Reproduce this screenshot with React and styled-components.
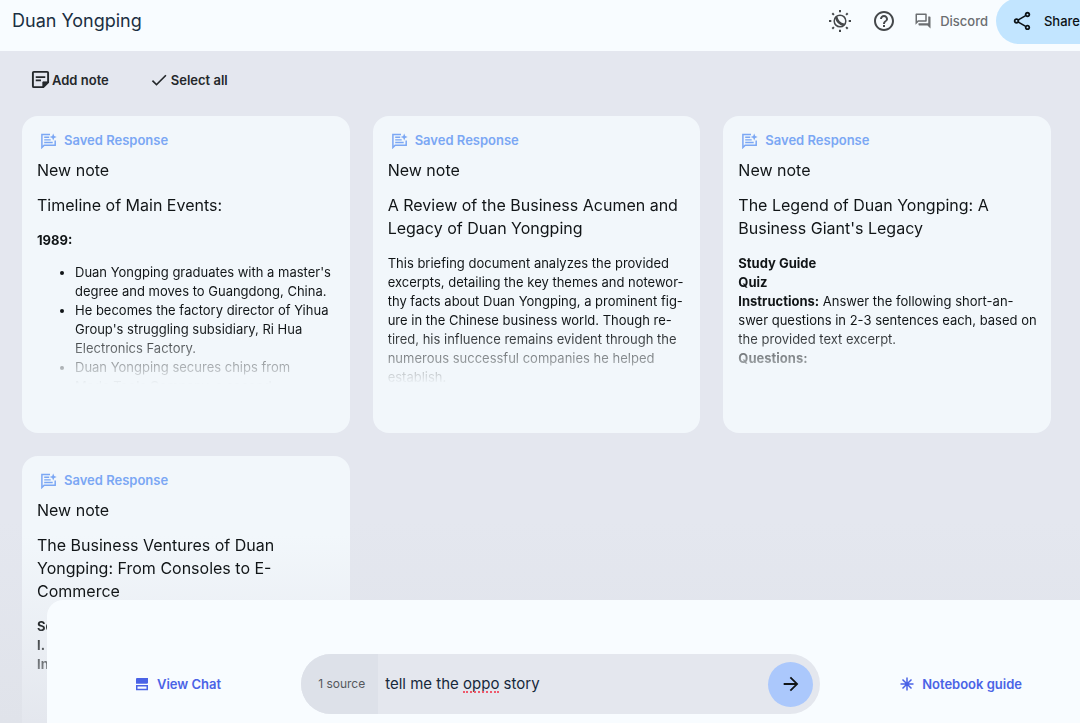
import React, { useState } from "react";
import styled, { createGlobalStyle } from "styled-components";
import { MdArrowForward, MdCheck, MdHelpOutline, MdOutlineForum, MdOutlineShare } from "react-icons/md";

const notes = [
  {
    title: ["Timeline of Main Events:"],
    body: (
      <>
        <p><b>1989:</b></p>
        <ul>
          <li>Duan Yongping graduates with a master's<br />degree and moves to Guangdong, China.</li>
          <li>He becomes the factory director of Yihua<br />Group's struggling subsidiary, Ri Hua<br />Electronics Factory.</li>
          <li>Duan Yongping secures chips from<br />Made Tools Company, a second</li>
        </ul>
      </>
    ),
  },
  {
    title: ["A Review of the Business Acumen and", "Legacy of Duan Yongping"],
    body: (
      <p>
        This briefing document analyzes the provided<br />
        excerpts, detailing the key themes and notewor-<br />
        thy facts about Duan Yongping, a prominent fig-<br />
        ure in the Chinese business world. Though re-<br />
        tired, his influence remains evident through the<br />
        numerous successful companies he helped<br />
        establish.
      </p>
    ),
  },
  {
    title: ["The Legend of Duan Yongping: A", "Business Giant's Legacy"],
    body: (
      <p>
        <b>Study Guide</b><br />
        <b>Quiz</b><br />
        <b>Instructions:</b> Answer the following short-an-<br />
        swer questions in 2-3 sentences each, based on<br />
        the provided text excerpt.<br />
        <b>Questions:</b>
      </p>
    ),
  },
  {
    title: ["The Business Ventures of Duan", "Yongping: From Consoles to E-", "Commerce"],
    faded: true,
    body: (
      <p>
        <b>So</b><br />
        <b>I.</b><br />
        <b>In</b>
      </p>
    ),
  },
];

function ThemeIcon() {
  return (
    <svg width="24" height="24" viewBox="0 0 24 24" fill="none" stroke="currentColor" strokeWidth="2">
      <circle cx="12" cy="12" r="5.8" strokeWidth="1.5" />
      <path d="M8.200 8Q9.500 14.500 16 15.800" strokeWidth="2.600" />
      <path d="M12 1v2.300M12 20.700V23M1 12h2.300M20.700 12H23M4.300 4.300l1.600 1.600M18.100 18.100l1.600 1.600M4.300 19.700l1.600-1.600M18.100 5.900l1.600-1.600" />
    </svg>
  );
}

function NoteIcon() {
  return (
    <svg width="19" height="19" viewBox="0 0 20 20" fill="none" stroke="currentColor" strokeWidth="2">
      <path d="M3 2h14a1 1 0 0 1 1 1v10l-5 5H3a1 1 0 0 1-1-1V3a1 1 0 0 1 1-1Z" />
      <path d="M12.500 18v-5.500H18Z" fill="currentColor" strokeWidth="1" />
      <path d="M5 7.500h10M5 11h5.500" strokeWidth="1.800" />
    </svg>
  );
}

function ResponseIcon() {
  return (
    <svg width="18" height="18" viewBox="0 0 18 18" fill="none" stroke="currentColor" strokeWidth="1.500">
      <path d="M11 3.500H2.900V16.500L5.200 14.200H16.200V9.500" />
      <path d="M5.200 6.300h5M5.200 8.900h6.500M5.200 11.500h8.500" strokeWidth="1.400" />
      <path d="M14.200 2.500l1 2.500 2.500 1-2.500 1-1 2.500-1-2.500-2.500-1 2.500-1Z" fill="currentColor" stroke="none" />
    </svg>
  );
}

function ChatIcon() {
  return (
    <svg width="14" height="14" viewBox="0 0 14 14" fill="currentColor">
      <path d="M2 1H13V5.500a1.200 1.200 0 0 1-1.200 1.200H1V2a1 1 0 0 1 1-1Z" />
      <path d="M1 8h12V13.200H1ZM2.500 9.500v2.200h9V9.500Z" fillRule="evenodd" />
    </svg>
  );
}

function GuideIcon() {
  return (
    <svg width="14" height="14" viewBox="0 0 14 14" stroke="currentColor" strokeWidth="1.500">
      <path d="M7 .5v13M.5 7h13M2.500 2.500l9 9M11.500 2.500l-9 9" />
    </svg>
  );
}

export default function App() {
  const [query, setQuery] = useState("tell me the oppo story");

  return (
    <Page>
      <GlobalStyle />
      <Header>
        <Title>Duan Yongping</Title>
        <HeaderActions>
          <IconButton aria-label="Toggle theme"><ThemeIcon /></IconButton>
          <IconButton aria-label="Help"><MdHelpOutline size={24} /></IconButton>
          <DiscordLink href="#discord"><MdOutlineForum size={18} />Discord</DiscordLink>
          <ShareButton><MdOutlineShare size={22} />Share</ShareButton>
        </HeaderActions>
      </Header>

      <Main>
        <Toolbar>
          <ToolButton><NoteIcon />Add note</ToolButton>
          <ToolButton><MdCheck size={20} />Select all</ToolButton>
        </Toolbar>
        <Grid>
          {notes.map((note) => (
            <Card key={note.title[0]} $faded={note.faded}>
              <Tag><ResponseIcon />Saved Response</Tag>
              <Excerpt $fade={note.faded ? 110 : 54}>
                <NoteName>New note</NoteName>
                <NoteTitle>
                  {note.title.map((line) => <span key={line}>{line}</span>)}
                </NoteTitle>
                <NoteBody>{note.body}</NoteBody>
              </Excerpt>
            </Card>
          ))}
        </Grid>
      </Main>

      <Dock>
        <DockButton><ChatIcon />View Chat</DockButton>
        <Prompt onSubmit={(e) => e.preventDefault()}>
          <Sources>1 source</Sources>
          <Field>
            <input
              aria-label="Ask a question"
              spellCheck="false"
              value={query}
              onChange={(e) => setQuery(e.target.value)}
            />
            {query.includes("oppo") && <Misspelling />}
          </Field>
          <SendButton aria-label="Send"><MdArrowForward size={22} /></SendButton>
        </Prompt>
        <DockButton><GuideIcon />Notebook guide</DockButton>
      </Dock>
    </Page>
  );
}

const GlobalStyle = createGlobalStyle`
  * {
    box-sizing: border-box;
  }
  body {
    margin: 0;
    background: #e4e7ef;
    font-family: Inter, "Liberation Sans", sans-serif;
    color: #111517;
  }
  button, input {
    font: inherit;
    color: inherit;
    border: 0;
    padding: 0;
    background: none;
  }
  button {
    cursor: pointer;
    white-space: nowrap;
  }
  svg {
    flex: none;
  }
`;

const Page = styled.div`
  display: flex;
  flex-direction: column;
  height: 100vh;
  overflow: hidden;
`;

const Header = styled.header`
  display: flex;
  flex: none;
  align-items: center;
  justify-content: space-between;
  height: 51px;
  padding: 0 0 10px 12px;
  background: #f8fcff;
  overflow: hidden;
`;

const Title = styled.h1`
  margin: 0;
  font-size: 18px;
  line-height: 24px;
  font-weight: 400;
  color: #1b2f42;
`;

const HeaderActions = styled.div`
  display: flex;
  align-items: center;
`;

const IconButton = styled.button`
  display: flex;
  padding: 0 10px;
  color: #45484b;
`;

const DiscordLink = styled.a`
  display: flex;
  align-items: center;
  gap: 8px;
  margin: 0 8px;
  font-size: 13px;
  font-weight: 500;
  color: #6b6e71;
  text-decoration: none;
`;

const ShareButton = styled.button`
  display: flex;
  align-items: center;
  gap: 11px;
  height: 46px;
  margin-right: -22px;
  padding: 0 22px 0 15px;
  border-radius: 23px;
  background: #c2e5ff;
  font-size: 13px;
  font-weight: 500;
  color: #0b1115;
`;

const Main = styled.main`
  flex: 1;
  min-height: 0;
  overflow: hidden;
  padding: 16px 29px 0 22px;
  background: linear-gradient(to bottom, #e4e7ef 70%, #e0e3ea);
`;

const Toolbar = styled.div`
  display: flex;
  gap: 40px;
  height: 49px;
  padding-left: 9px;
`;

const ToolButton = styled.button`
  display: flex;
  align-items: center;
  gap: 2px;
  height: 25px;
  font-size: 13px;
  font-weight: 600;
  color: #24282b;
`;

const Grid = styled.div`
  display: grid;
  grid-template-columns: repeat(3, minmax(0, 1fr));
  gap: 23px;
`;

const Card = styled.article`
  display: flex;
  flex-direction: column;
  height: 317px;
  padding: 12px 15px 49px;
  border-radius: 16px;
  background: ${(props) => (props.$faded ? "linear-gradient(to bottom, #f2f7fb 25%, #e3e6ed 88%)" : "#f2f7fb")};
`;

const Tag = styled.div`
  display: flex;
  align-items: center;
  gap: 7px;
  height: 24px;
  padding-left: 2px;
  font-size: 13px;
  font-weight: 600;
  color: #7ba7f4;
`;

const Excerpt = styled.div`
  flex: 1;
  min-height: 0;
  margin-top: 6px;
  overflow: hidden;
  white-space: nowrap;
  mask-image: linear-gradient(to bottom, #000 calc(100% - ${(props) => props.$fade}px), transparent);
`;

const NoteName = styled.h2`
  margin: 0;
  font-size: 16px;
  line-height: 24px;
  font-weight: 400;
`;

const NoteTitle = styled.h3`
  display: flex;
  flex-direction: column;
  margin: 12px 0 14px;
  font-size: 16px;
  line-height: 23px;
  font-weight: 400;
`;

const NoteBody = styled.div`
  font-size: 13px;
  line-height: 19px;

  p {
    margin: 0;
  }
  ul {
    margin: 13px 0 0;
    padding-left: 38px;
  }
  b {
    font-weight: 700;
  }
`;

const Dock = styled.footer`
  position: fixed;
  right: 0;
  bottom: 0;
  left: 47px;
  display: flex;
  align-items: center;
  gap: 80px;
  height: 123px;
  padding: 45px 58px 0 88px;
  border-radius: 16px 0 0 0;
  background: #f8fcff;
`;

const DockButton = styled.button`
  display: flex;
  align-items: center;
  gap: 8px;
  font-size: 13px;
  font-weight: 600;
  color: #4a63e6;
`;

const Prompt = styled.form`
  display: flex;
  flex: 1;
  align-items: center;
  height: 60px;
  padding-right: 7px;
  border-radius: 30px;
  background: #e4e7ee;
  overflow: hidden;
`;

const Sources = styled.span`
  padding: 0 13px 0 17px;
  background: #dde1e9;
  font-size: 12px;
  line-height: 60px;
  color: #55585c;
`;

const Field = styled.label`
  position: relative;
  flex: 1;
  min-width: 0;
  padding-left: 7px;

  input {
    width: 100%;
    font-size: 15px;
    line-height: 24px;
    color: #17293b;
    outline: none;
  }
`;

const Misspelling = styled.span`
  position: absolute;
  bottom: 3px;
  left: 85px;
  width: 36px;
  border-bottom: 2px dotted #ee5a6d;
`;

const SendButton = styled.button`
  display: flex;
  align-items: center;
  justify-content: center;
  width: 45px;
  height: 45px;
  border-radius: 50%;
  background: #abc8fc;
`;
